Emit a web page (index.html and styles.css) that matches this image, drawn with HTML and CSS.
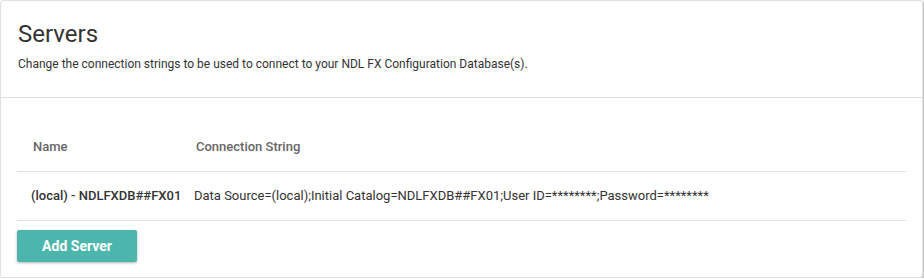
FILE: index.html
```html
<!DOCTYPE html>
<html lang="en">
<head>
    <meta charset="UTF-8">
    <title>Servers</title>
    <link rel="stylesheet" href="styles.css">
</head>
<body>

<div class="card">
    <div class="card-header">
        <h1 class="title">Servers</h1>
        <p class="subtitle">Change the connection strings to be used to connect to your NDL FX Configuration Database(s).</p>
    </div>
    <div class="card-body">
        <table class="servers">
            <colgroup>
                <col class="col-name">
                <col>
            </colgroup>
            <thead>
                <tr>
                    <th>Name</th>
                    <th>Connection String</th>
                </tr>
            </thead>
            <tbody>
                <tr>
                    <td class="server-name">(local) - NDLFXDB##FX01</td>
                    <td>Data Source=(local);Initial Catalog=NDLFXDB##FX01;User ID=********;Password=********</td>
                </tr>
            </tbody>
        </table>
        <button class="add-button">Add Server</button>
    </div>
</div>

</body>
</html>
```

FILE: styles.css
```css
body {
    margin: 0;
    background: #fff;
    font-family: Roboto, 'Noto Sans', sans-serif;
    color: #333;
}
.card {
    width: 923px;
    height: 278px;
    box-sizing: border-box;
    border: 1px solid #e0e0e0;
    border-radius: 3px;
    box-shadow: 1px 1px 1px rgba(0, 0, 0, 0.25);
    background: #fff;
}
.card-header {
    padding: 19px 17px 25px;
    border-bottom: 1px solid #ddd;
}
.title {
    margin: 0;
    font-size: 24px;
    line-height: 28px;
    font-weight: 400;
    color: #333;
}
.subtitle {
    margin: 8px 0 0;
    font-size: 12px;
    line-height: 16px;
}
.card-body {
    padding: 25px 16px 0 16px;
}
.servers {
    width: 100%;
    table-layout: fixed;
    border-collapse: collapse;
    font-size: 13px;
    line-height: 16px;
}
.servers .col-name {
    width: 163px;
}
.servers th {
    text-align: left;
    font-weight: 500;
    color: #666;
    padding: 16px 0 16px 16px;
    border-bottom: 1px solid #e0e0e0;
}
.servers td {
    padding: 16px 0 16px 14px;
    border-bottom: 1px solid #e0e0e0;
    white-space: nowrap;
}
.servers td.server-name {
    font-weight: 500;
}
.add-button {
    margin-top: 9px;
    width: 120px;
    height: 32px;
    border: none;
    border-radius: 2px;
    background-color: #4db6ac;
    color: #fff;
    font-family: Roboto, sans-serif;
    font-size: 14px;
    font-weight: 700;
    box-shadow: 0 1px 3px rgba(0, 0, 0, 0.3);
    cursor: pointer;
}
```
